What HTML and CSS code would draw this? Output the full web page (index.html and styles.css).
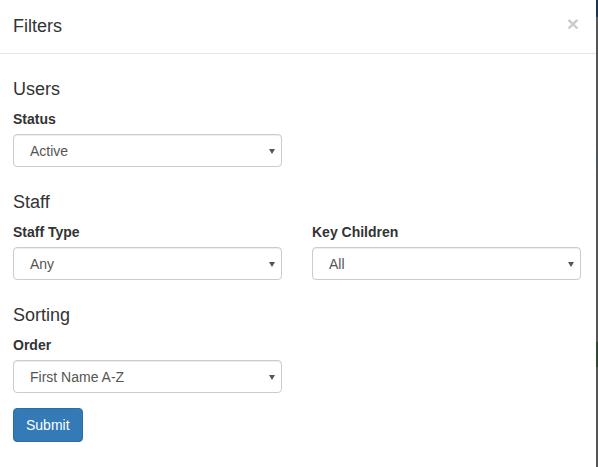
FILE: index.html
```html
<!DOCTYPE html>
<html>
<head>
<meta charset="utf-8">
<link rel="stylesheet" href="styles.css">
</head>
<body>
<div class="screen">
  <div class="modal">
    <div class="modal-header">
      <h4 class="modal-title">Filters</h4>
      <button class="close" type="button">×</button>
    </div>
    <div class="modal-body">
      <h4 class="section">Users</h4>
      <div class="row">
        <div class="form-group">
          <label>Status</label>
          <div class="select"><span>Active</span></div>
        </div>
        <div></div>
      </div>
      <h4 class="section">Staff</h4>
      <div class="row">
        <div class="form-group">
          <label>Staff Type</label>
          <div class="select"><span>Any</span></div>
        </div>
        <div class="form-group">
          <label>Key Children</label>
          <div class="select"><span>All</span></div>
        </div>
      </div>
      <h4 class="section">Sorting</h4>
      <div class="row">
        <div class="form-group">
          <label>Order</label>
          <div class="select"><span>First Name A-Z</span></div>
        </div>
        <div></div>
      </div>
      <button class="btn-primary" type="button">Submit</button>
    </div>
  </div>
  <div class="backdrop"></div>
</div>
</body>
</html>
```
FILE: styles.css
```css
* { box-sizing: border-box; }
html, body { margin: 0; padding: 0; }
body {
  font-family: "Liberation Sans", Arial, sans-serif;
  font-size: 14px;
  line-height: 1.42857;
  color: #333;
  background: #fff;
}
.screen {
  display: flex;
  width: 598px;
  height: 467px;
  overflow: hidden;
}
.modal {
  width: 596px;
  height: 467px;
  background: #fff;
}
.backdrop {
  width: 2px;
  height: 467px;
  background: linear-gradient(to bottom,
    #1d3550 0, #1d3550 17px,
    #555 17px, #555 150px,
    #4d5557 150px, #4d5557 170px,
    #555 170px, #555 342px,
    #2f4a30 342px, #2f4a30 367px,
    #555 367px, #555 100%);
}
.modal-header {
  display: flex;
  justify-content: space-between;
  align-items: flex-start;
  padding: 15px 15px 15px 13px;
  height: 54px;
  border-bottom: 1px solid #e5e5e5;
}
.modal-title {
  margin: 0;
  font-size: 18px;
  font-weight: normal;
  line-height: 22px;
  color: #333;
}
.close {
  background: none;
  border: 0;
  padding: 0;
  margin: -2px 2px 0 0;
  font-family: "Liberation Sans", Arial, sans-serif;
  font-size: 21px;
  font-weight: bold;
  line-height: 1;
  color: #000;
  opacity: 0.2;
}
.modal-body {
  padding: 15px 15px 15px 13px;
}
.section {
  margin: 10px 0 10px;
  font-size: 18px;
  font-weight: normal;
  line-height: 20px;
  color: #333;
}
.row {
  display: grid;
  grid-template-columns: 269px 269px;
  column-gap: 30px;
}
.form-group {
  margin-bottom: 15px;
}
label {
  display: block;
  margin-bottom: 5px;
  font-weight: bold;
  font-size: 14px;
  line-height: 20px;
  color: #333;
}
.select {
  position: relative;
  height: 33px;
  padding: 6px 16px;
  border: 1px solid #ccc;
  border-radius: 4px;
  background: #fff;
  box-shadow: inset 0 1px 1px rgba(0,0,0,.075);
  color: #555;
  font-size: 14px;
  line-height: 20px;
}
.select::after {
  content: "";
  position: absolute;
  right: 6px;
  top: 14px;
  border-left: 3px solid transparent;
  border-right: 3px solid transparent;
  border-top: 5px solid #555;
}
.btn-primary {
  display: inline-block;
  padding: 6px 12px;
  font-family: "Liberation Sans", Arial, sans-serif;
  font-size: 14px;
  line-height: 20px;
  color: #fff;
  background: #337ab7;
  border: 1px solid #2e6da4;
  border-radius: 4px;
}
```
